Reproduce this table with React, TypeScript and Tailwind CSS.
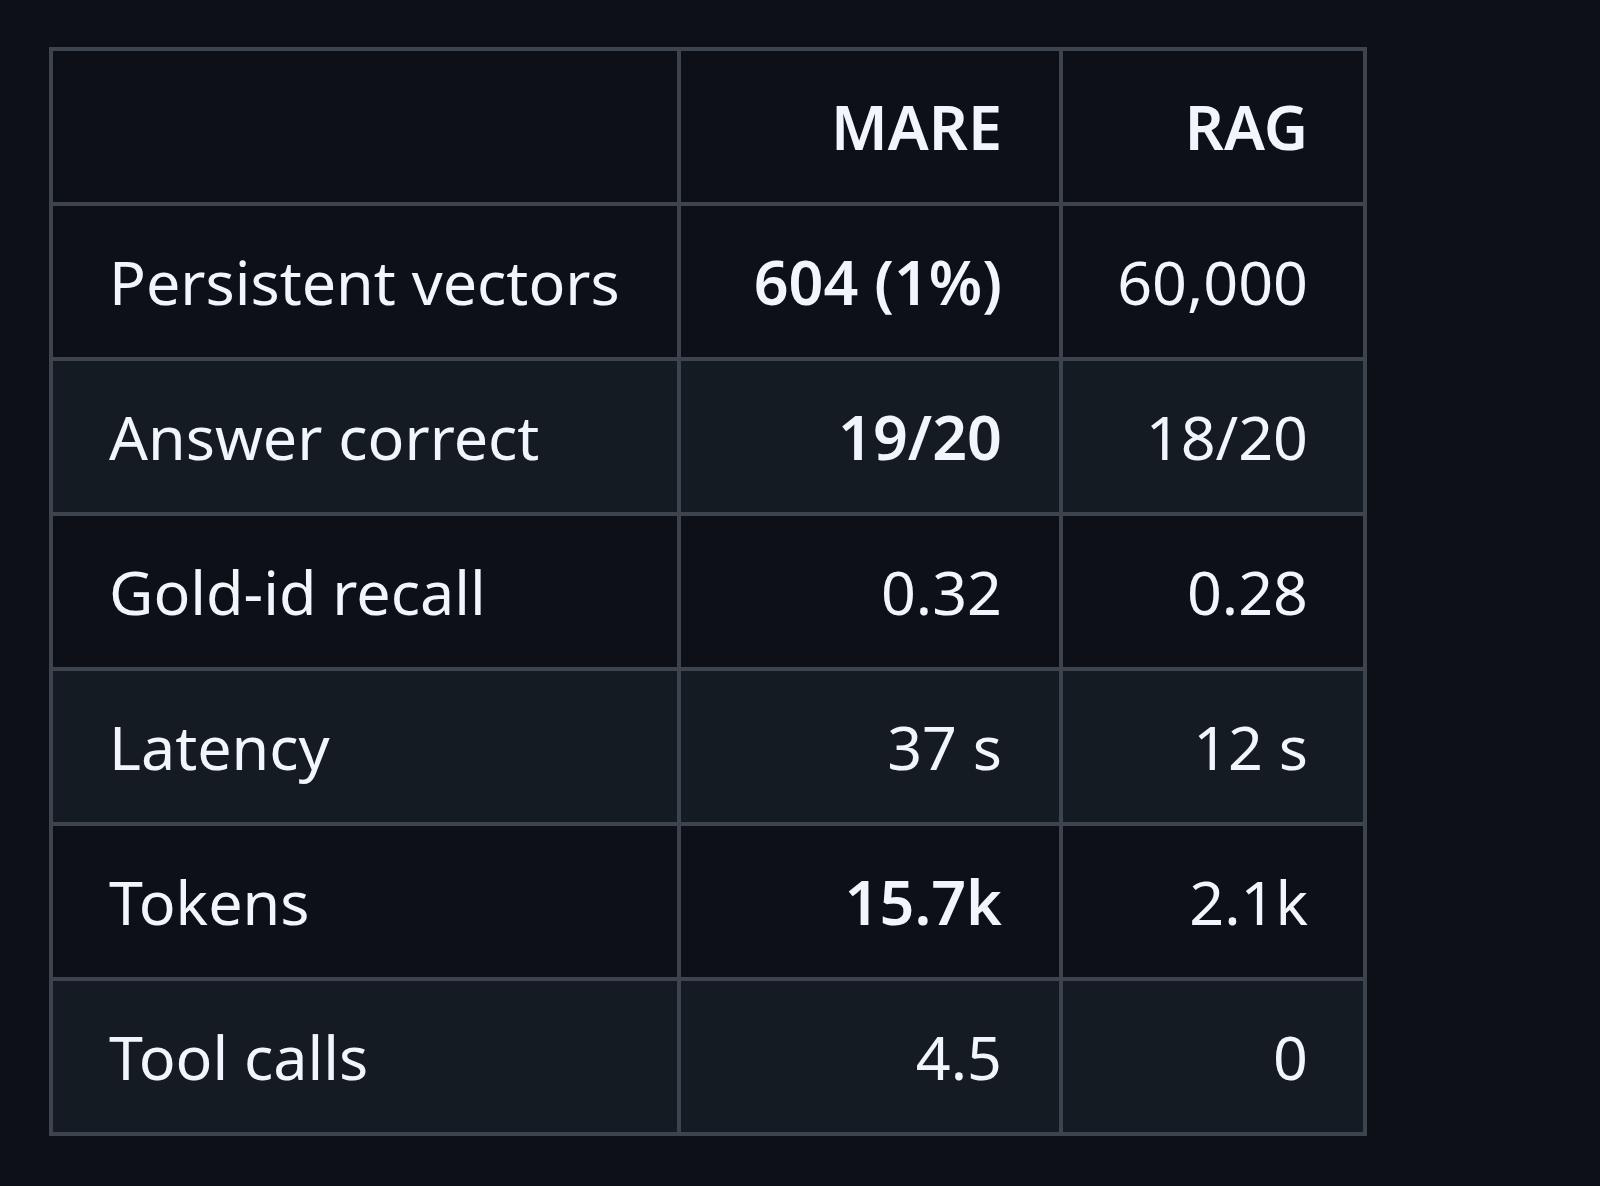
import React from "react";

const rows: { label: string; mare: string; rag: string; bold: boolean }[] = [
  { label: "Persistent vectors", mare: "604 (1%)", rag: "60,000", bold: true },
  { label: "Answer correct", mare: "19/20", rag: "18/20", bold: true },
  { label: "Gold-id recall", mare: "0.32", rag: "0.28", bold: false },
  { label: "Latency", mare: "37 s", rag: "12 s", bold: false },
  { label: "Tokens", mare: "15.7k", rag: "2.1k", bold: true },
  { label: "Tool calls", mare: "4.5", rag: "0", bold: false },
];

export default function App() {
  return (
    <div
      className="w-[1600px] h-[1186px] bg-[#0d1117] text-[#f0f6fc] pl-[49px] pt-[47px]"
      style={{ fontFamily: '"Noto Sans", "Open Sans", sans-serif' }}
    >
      <div className="inline-grid grid-cols-[624px_378px_300px] auto-rows-[151px] gap-[4px] p-[4px] bg-[#3d444d] text-[61px]">
        <div className="bg-[#0d1117]" />
        <div className="bg-[#0d1117] flex items-center justify-end pr-[57px] font-semibold">MARE</div>
        <div className="bg-[#0d1117] flex items-center justify-end pr-[55px] font-semibold">RAG</div>
        {rows.map((r, i) => {
          const bg = i % 2 === 1 ? "bg-[#151b23]" : "bg-[#0d1117]";
          return (
            <React.Fragment key={r.label}>
              <div className={`${bg} flex items-center pl-[56px]`}>{r.label}</div>
              <div className={`${bg} flex items-center justify-end pr-[57px] ${r.bold ? "font-semibold" : ""}`}>{r.mare}</div>
              <div className={`${bg} flex items-center justify-end pr-[55px]`}>{r.rag}</div>
            </React.Fragment>
          );
        })}
      </div>
    </div>
  );
}
